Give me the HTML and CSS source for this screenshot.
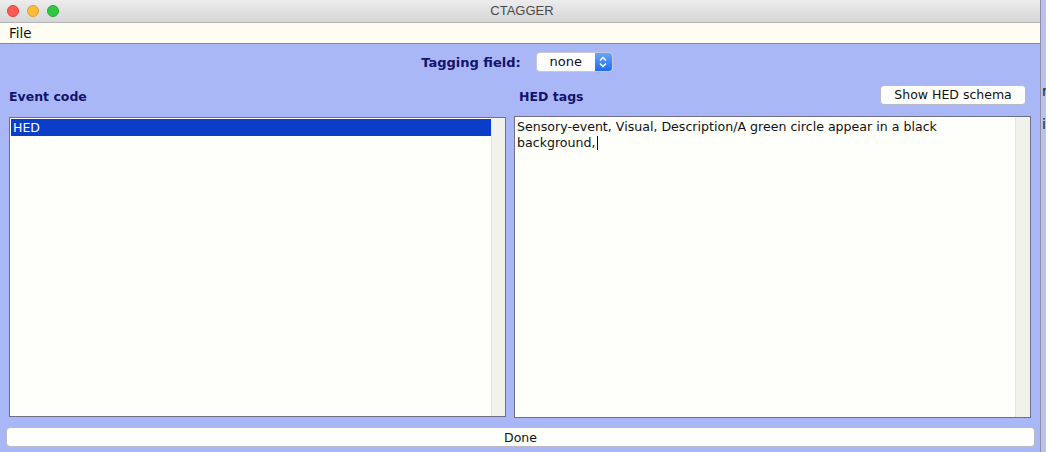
FILE: index.html
```html
<!DOCTYPE html>
<html>
<head>
<meta charset="utf-8">
<link rel="stylesheet" href="styles.css">
</head>
<body>
<div class="screen">
  <div class="window">
    <div class="titlebar">
      <div class="lights">
        <span class="light red"></span>
        <span class="light yellow"></span>
        <span class="light green"></span>
      </div>
      <div class="title">CTAGGER</div>
    </div>
    <div class="menubar"><span class="menu-item">File</span></div>
    <div class="main">
      <div class="tagging-row">
        <span class="label">Tagging field:</span>
        <div class="select">
          <span class="select-value">none</span>
          <span class="select-arrows">
            <svg width="10" height="14" viewBox="0 0 10 14"><path d="M2 5.5 L5 2.5 L8 5.5 M2 8.5 L5 11.5 L8 8.5" fill="none" stroke="#fff" stroke-width="1.5"/></svg>
          </span>
        </div>
      </div>
      <div class="columns">
        <div class="col-head"><span class="label small">Event code</span></div>
        <div class="col-head right-head"><span class="label small">HED tags</span><button class="btn schema-btn">Show HED schema</button></div>
        <div class="panel list-panel">
          <div class="panel-body">
            <div class="list-row selected">HED</div>
          </div>
          <div class="scroll-track"></div>
        </div>
        <div class="panel text-panel">
          <div class="panel-body text-body">Sensory-event, Visual, Description/A green circle appear in a black<br>background,<span class="caret"></span></div>
          <div class="scroll-track"></div>
        </div>
      </div>
      <button class="btn done-btn">Done</button>
    </div>
  </div>
  <div class="outside">
    <span class="out-r">r</span>
    <span class="out-i">i</span>
  </div>
</div>
</body>
</html>
```
FILE: styles.css
```css
* { box-sizing: border-box; }
html, body { margin: 0; padding: 0; }
body {
  width: 1046px;
  height: 452px;
  overflow: hidden;
  font-family: "DejaVu Sans", sans-serif;
  background: #b9c2ec;
}
.screen { display: flex; height: 452px; }
.window {
  width: 1041px;
  flex-shrink: 0;
  display: flex;
  flex-direction: column;
  border-right: 1px solid #8e8ea8;
  background: #a9b7f6;
}
.titlebar {
  height: 22px;
  flex-shrink: 0;
  background: linear-gradient(#ececec, #d6d6d6);
  display: flex;
  align-items: center;
  position: relative;
}
.lights { display: flex; gap: 8px; padding-left: 7px; }
.light { width: 12px; height: 12px; border-radius: 50%; display: block; }
.red { background: #fc5a55; border: 1px solid #e0443e; }
.yellow { background: #fdbb3a; border: 1px solid #dea131; }
.green { background: #33c645; border: 1px solid #27a934; }
.title {
  position: absolute;
  left: 0; right: 0; top: 0;
  line-height: 22px;
  text-align: center;
  font-family: "Liberation Sans", sans-serif;
  font-size: 13px;
  color: #4a4a4a;
  padding-left: 4px;
}
.menubar {
  height: 22px;
  flex-shrink: 0;
  background: #fdfdf4;
  border-top: 1px solid #b4b4b4;
  border-bottom: 1px solid #8a8a8a;
  display: flex;
  align-items: center;
  padding-left: 9px;
}
.menu-item { color: #111; font-size: 13.5px; }
.main {
  flex: 1;
  min-height: 0;
  display: flex;
  flex-direction: column;
  padding: 8px 10px 5px 9px;
}
.label {
  font-weight: bold;
  color: #13136b;
  font-size: 13px;
}
.label.small { font-size: 12.5px; }
.tagging-row {
  display: flex;
  justify-content: center;
  align-items: center;
  gap: 15px;
  height: 20px;
  flex-shrink: 0;
  padding-right: 5px;
}
.select {
  width: 77px;
  height: 20px;
  background: #fff;
  border-radius: 4px;
  border: 1px solid #c8c8d4;
  display: flex;
  overflow: hidden;
}
.select-value {
  flex: 1;
  text-align: center;
  font-size: 13px;
  line-height: 18px;
  color: #111;
}
.select-arrows {
  width: 17px;
  background: linear-gradient(#68a5fa, #1d6cf0);
  display: flex;
  align-items: center;
  justify-content: center;
}
.columns {
  display: grid;
  grid-template-columns: 497px 517px;
  grid-template-rows: 22px 302px;
  column-gap: 8px;
  row-gap: 10px;
  margin-top: 12px;
  flex-shrink: 0;
}
.col-head { display: flex; align-items: center; padding-top: 2px; }
.right-head { justify-content: space-between; padding-left: 5px; padding-right: 5px; }
.btn {
  background: #fefefa;
  border: 1px solid #b8b8c8;
  border-radius: 4px;
  font-family: "DejaVu Sans", sans-serif;
  font-size: 12.5px;
  color: #111;
  padding: 0;
}
.schema-btn { width: 146px; height: 20px; margin-top: -3px; }
.panel {
  display: flex;
  background: #fefefb;
  border: 1px solid #6f6f88;
  height: 302px;
}
.list-panel { margin-top: 1px; height: 300px; }
.panel-body { flex: 1; padding: 1px 0 0 1px; }
.scroll-track {
  width: 14px;
  background: #f2f2ec;
  border-left: 1px solid #e4e4e4;
}
.list-row {
  height: 17px;
  line-height: 17px;
  font-size: 12.5px;
  padding-left: 2px;
}
.selected { background: #0b3ec8; color: #fff; }
.text-body {
  padding: 2px 0 0 2px;
  font-size: 12.6px;
  line-height: 16px;
  color: #111;
}
.text-panel .scroll-track { width: 15px; }
.caret {
  display: inline-block;
  width: 1px;
  height: 14px;
  background: #111;
  vertical-align: -3px;
  margin-left: 1px;
}
.done-btn {
  height: 20px;
  flex-shrink: 0;
  margin: 9px -5px 0 -3px;
  text-align: center;
}
.outside {
  flex: 1;
  position: relative;
  font-size: 14px;
  color: #222;
}
.out-r { position: absolute; left: 1px; top: 83px; }
.out-i { position: absolute; left: 1px; top: 116px; }
```
